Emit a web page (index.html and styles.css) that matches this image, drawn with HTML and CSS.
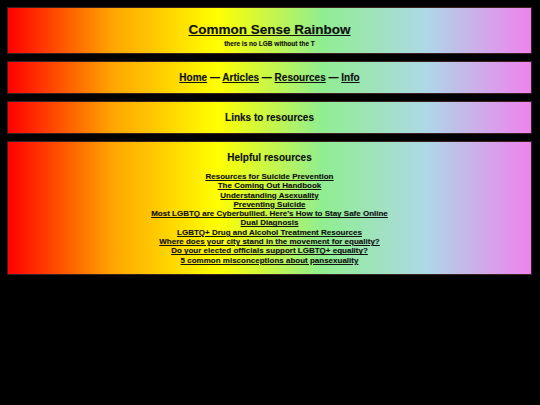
FILE: index.html
```html
<!DOCTYPE html>
<html lang="en">
<head>
<meta charset="utf-8">
<title>Common Sense Rainbow</title>
<link rel="stylesheet" href="styles.css">
</head>
<body>
<div class="page">
  <header class="box header">
    <a class="site-title" href="#">Common Sense Rainbow</a>
    <p class="tagline">there is no LGB without the T</p>
  </header>
  <nav class="box nav">
    <a href="#">Home</a> — <a href="#">Articles</a> — <a href="#">Resources</a> — <a href="#">Info</a>
  </nav>
  <section class="box banner">
    <h2 class="banner-title">Links to resources</h2>
  </section>
  <section class="box content">
    <h3 class="content-title">Helpful resources</h3>
    <ul class="links">
      <li><a href="#">Resources for Suicide Prevention</a></li>
      <li><a href="#">The Coming Out Handbook</a></li>
      <li><a href="#">Understanding Asexuality</a></li>
      <li><a href="#">Preventing Suicide</a></li>
      <li><a href="#">Most LGBTQ are Cyberbullied. Here's How to Stay Safe Online</a></li>
      <li><a href="#">Dual Diagnosis</a></li>
      <li><a href="#">LGBTQ+ Drug and Alcohol Treatment Resources</a></li>
      <li><a href="#">Where does your city stand in the movement for equality?</a></li>
      <li><a href="#">Do your elected officials support LGBTQ+ equality?</a></li>
      <li><a href="#">5 common misconceptions about pansexuality</a></li>
    </ul>
  </section>
</div>
</body>
</html>
```

FILE: styles.css
```css
html, body {
  margin: 0;
  padding: 0;
  background: #000;
}

body {
  font-family: "Liberation Sans", Arial, sans-serif;
  color: #111;
}

.page {
  display: flex;
  flex-direction: column;
  gap: 7px;
  padding: 7px 8px 0 7px;
}

.box {
  background: linear-gradient(to right, red, orange, yellow, lightgreen, lightblue, violet);
  border: 1px solid #3a2020;
  text-align: center;
  font-weight: bold;
  text-shadow: 0 0 1px rgba(0, 0, 0, 0.25);
}

.box a {
  color: #111;
  text-decoration: underline;
}

.header {
  padding: 13px 0 5px;
  display: flex;
  flex-direction: column;
  align-items: center;
}

.site-title {
  font-size: 13.5px;
  line-height: 17px;
}

.tagline {
  margin: 2px 0 0;
  font-size: 6.5px;
  line-height: 8px;
}

.nav {
  padding: 9px 0;
  font-size: 10px;
  line-height: 13px;
}

.banner {
  padding: 9px 0;
}

.banner-title {
  margin: 0;
  font-size: 10px;
  line-height: 13px;
}

.content {
  padding: 9px 0 9px;
}

.content-title {
  margin: 0 0 8px;
  font-size: 10px;
  line-height: 13px;
}

.links {
  list-style: none;
  margin: 0;
  padding: 0;
  font-size: 8px;
  line-height: 9.3px;
}
```
